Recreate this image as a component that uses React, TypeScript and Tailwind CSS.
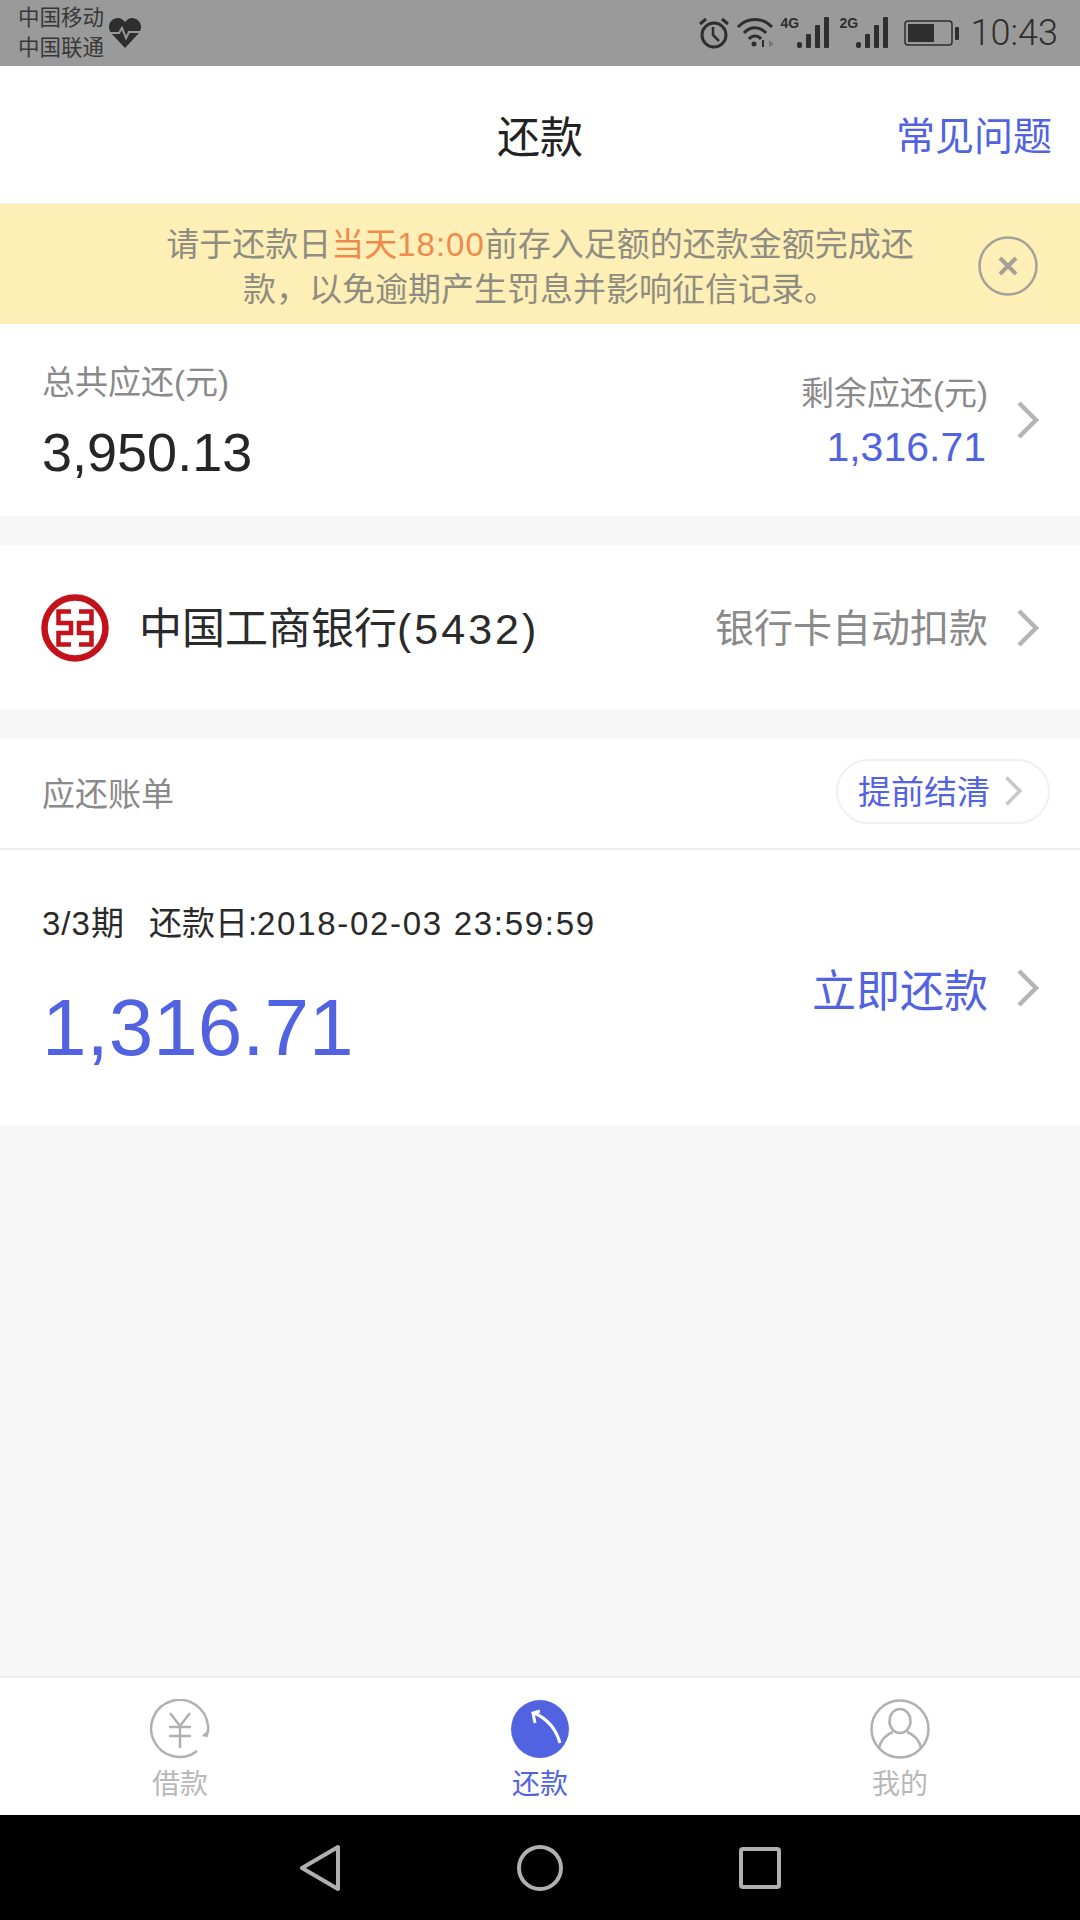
import React from "react";

const FONT = "[font-family:'Liberation_Sans','Noto_Sans_CJK_SC',sans-serif]";

function Chevron({ className = "", color = "#b4b4b8" }: { className?: string; color?: string }) {
  return (
    <svg className={className} width="24" height="40" viewBox="0 0 24 40" fill="none">
      <path d="M3 3 L20 20 L3 37" stroke={color} strokeWidth="4.5" />
    </svg>
  );
}

function StatusBar() {
  const bars = (
    <svg width="34" height="32" viewBox="0 0 34 32" fill="#2e2e2e">
      <rect x="0" y="25" width="5" height="6" rx="2" />
      <rect x="9" y="17" width="5" height="14" rx="1" />
      <rect x="18" y="8" width="5" height="23" rx="1" />
      <rect x="27" y="0" width="5" height="31" rx="1" />
    </svg>
  );
  return (
    <div className="h-[66px] bg-[#9a9a9a] flex items-center justify-between pl-[18px] pr-[22px] text-[#2e2e2e]">
      <div className="flex items-center gap-[4px]">
        <div className="text-[21.5px] leading-[30px] text-[#383838]">
          <div>中国移动</div>
          <div>中国联通</div>
        </div>
        <svg width="34" height="32" viewBox="0 0 34 32">
          <path d="M17 31 L3 16 C-2 9 3 1 10 1 C13 1 15 3 17 5 C19 3 21 1 24 1 C31 1 36 9 31 16 Z" fill="#2e2e2e" />
          <path d="M2 16 H11 L14 11 L18 21 L21 15 H32" stroke="#9a9a9a" strokeWidth="2" fill="none" />
        </svg>
      </div>
      <div className="flex items-center">
        <svg width="32" height="32" viewBox="0 0 32 32" fill="none" stroke="#2e2e2e" className="mr-[6px]">
          <circle cx="16" cy="18" r="12" strokeWidth="3" />
          <path d="M15 10 V18 L21 24" strokeWidth="2.5" />
          <path d="M2 7 L8 2 M30 7 L24 2" strokeWidth="3" />
        </svg>
        <svg width="38" height="32" viewBox="0 0 38 32" fill="none" stroke="#2e2e2e" strokeWidth="3" className="mr-[7px]">
          <path d="M2 10 C11 0 27 0 36 10" />
          <path d="M8 16 C14 9 24 9 30 16" />
          <path d="M13 22 C16 18 22 18 25 22" />
          <circle cx="18" cy="27" r="2.5" fill="#2e2e2e" stroke="none" />
          <path d="M27 30 V23" strokeWidth="2" />
          <path d="M33 23 L38 27 L33 30 Z" fill="#777" stroke="none" />
        </svg>
        <div className="relative w-[50px] h-[32px] mr-[9px]">
          <span className="absolute left-0 top-[-2px] text-[14px] leading-[16px] font-bold">4G</span>
          <div className="absolute right-0 top-0">{bars}</div>
        </div>
        <div className="relative w-[50px] h-[32px] mr-[14px]">
          <span className="absolute left-0 top-[-2px] text-[14px] leading-[16px] font-bold">2G</span>
          <div className="absolute right-0 top-0">{bars}</div>
        </div>
        <svg width="56" height="28" viewBox="0 0 56 28" className="mr-[11px]">
          <rect x="1" y="2" width="47" height="24" rx="3" fill="none" stroke="#2e2e2e" strokeWidth="1.5" />
          <rect x="4" y="5" width="26" height="18" fill="#2e2e2e" />
          <rect x="51" y="8" width="4" height="13" rx="1" fill="#2e2e2e" />
        </svg>
        <span className="text-[36px] leading-none font-light [font-family:Roboto,sans-serif]">10:43</span>
      </div>
    </div>
  );
}

function IcbcLogo() {
  return (
    <svg width="68" height="68" viewBox="0 0 68 68" fill="none">
      <circle cx="34" cy="34" r="30.5" stroke="#c4121a" strokeWidth="6.5" />
      <path
        d="M30 17.5 H17.5 V29 H30 V39 H17.5 V50.5 H30 M38 17.5 H50.5 V29 H38 V39 H50.5 V50.5 H38"
        stroke="#c4121a"
        strokeWidth="4.5"
      />
    </svg>
  );
}

function TabBar() {
  return (
    <div className="h-[139px] bg-white border-t-2 border-[#ececec] grid grid-cols-3 text-[28px] leading-[34px]">
      <div className="flex flex-col items-center pt-[21px] text-[#b8b8b8]">
        <svg width="60" height="60" viewBox="0 0 60 60" fill="none" stroke="#b0b0b0" strokeWidth="2.5">
          <path d="M47 52 A28.5 28.5 0 1 1 58 27" />
          <path d="M58 27 C58.5 30 58 34 56 38 M58 33 L53 37" />
          <path d="M20 14 L30 27 L40 14 M19 28 H41 M19 37 H41 M30 27 V49" />
        </svg>
        <span className="mt-[9px]">借款</span>
      </div>
      <div className="flex flex-col items-center pt-[21px] text-[#5263e2]">
        <svg width="60" height="60" viewBox="0 0 60 60" fill="none">
          <circle cx="30" cy="30" r="29" fill="#5263e2" />
          <path d="M50 44 C46 30 38 20 24 14" stroke="#fff" strokeWidth="3" />
          <path d="M30 12 L23 14 L25 24" stroke="#fff" strokeWidth="3" />
        </svg>
        <span className="mt-[9px]">还款</span>
      </div>
      <div className="flex flex-col items-center pt-[21px] text-[#b8b8b8]">
        <svg width="60" height="60" viewBox="0 0 60 60" fill="none" stroke="#b0b0b0" strokeWidth="2.5">
          <circle cx="30" cy="30" r="28.5" />
          <ellipse cx="30" cy="22" rx="10.5" ry="12" />
          <path d="M9 50 C10 41 17 35 23 33 M51 50 C50 41 43 35 37 33" />
        </svg>
        <span className="mt-[9px]">我的</span>
      </div>
    </div>
  );
}

function NavBar() {
  return (
    <div className="h-[105px] bg-black flex items-center justify-center">
      <div className="grid grid-cols-3 w-[660px] justify-items-center items-center">
        <svg width="44" height="48" viewBox="0 0 44 48" fill="none" stroke="#b0b0b0" strokeWidth="4" strokeLinejoin="round">
          <path d="M40 3 V45 L4 24 Z" />
        </svg>
        <svg width="46" height="46" viewBox="0 0 46 46" fill="none" stroke="#b0b0b0" strokeWidth="4">
          <circle cx="23" cy="23" r="21" />
        </svg>
        <svg width="42" height="42" viewBox="0 0 42 42" fill="none" stroke="#b0b0b0" strokeWidth="4" strokeLinejoin="round">
          <rect x="2" y="2" width="38" height="38" rx="2" />
        </svg>
      </div>
    </div>
  );
}

export default function App() {
  return (
    <div className={`w-[1080px] h-[1920px] flex flex-col bg-[#f7f7f7] overflow-hidden ${FONT}`}>
      <StatusBar />
      <div className="h-[138px] bg-white relative flex items-center justify-center border-b border-[#f0f0f0] pt-[8px]">
        <span className="text-[43px] text-[#222]">还款</span>
        <span className="absolute right-[28px] top-[46px] text-[39px] leading-[50px] text-[#5263e2]">常见问题</span>
      </div>
      <div className="h-[120px] bg-[#fdefb6] flex items-center pl-[160px] pr-[42px] justify-between">
        <p className="w-[760px] mt-[5px] text-center text-[33px] leading-[45px] text-[#8f8d82]">
          请于还款日<span className="text-[#f08a4b]">当天<span className="tracking-[1px]">18:00</span></span>前存入足额的还款金额完成还款，以免逾期产生罚息并影响征信记录。
        </p>
        <svg width="60" height="60" viewBox="0 0 60 60" fill="none" stroke="#a3a199" className="mt-[3px]">
          <circle cx="30" cy="30" r="28.5" strokeWidth="2.5" />
          <path d="M22 22 L38 38 M38 22 L22 38" strokeWidth="4" />
        </svg>
      </div>

      <div className="h-[192px] bg-white flex justify-between pl-[42px] pr-[40px]">
        <div className="pt-[39px]">
          <div className="text-[33px] leading-[40px] text-[#8a8a8a]">总共应还(元)</div>
          <div className="mt-[18px] text-[54px] leading-[62px] text-[#262626]">3,950.13</div>
        </div>
        <div className="flex items-center gap-[28px]">
          <div className="text-right pt-[4px]">
            <div className="text-[33px] leading-[40px] text-[#8a8a8a]">剩余应还(元)</div>
            <div className="mt-[10px] text-[41px] leading-[46px] text-[#5263e2] pr-[2px]">1,316.71</div>
          </div>
          <Chevron />
        </div>
      </div>

      <div className="mt-[29px] h-[165px] bg-white flex items-center justify-between pl-[41px] pr-[40px]">
        <div className="flex items-center gap-[30px]">
          <IcbcLogo />
          <span className="text-[43px] text-[#2a2a2a] mt-[4px]">
            中国工商银行<span className="tracking-[3px]">(5432)</span>
          </span>
        </div>
        <div className="flex items-center gap-[28px]">
          <span className="text-[39px] text-[#8a8a8a] mt-[4px]">银行卡自动扣款</span>
          <Chevron />
        </div>
      </div>

      <div className="mt-[28px] h-[112px] bg-white flex items-center justify-between pl-[42px] pr-[30px] border-b-2 border-[#ececec]">
        <span className="text-[33px] text-[#8a8a8a] mt-[4px]">应还账单</span>
        <div className="w-[214px] h-[65px] rounded-full border-2 border-[#f0f0f0] flex items-center pl-[20px] gap-[14px] mb-[4px]">
          <span className="text-[33px] leading-none text-[#5263e2] mt-[2px]">提前结清</span>
          <Chevron className="w-[19px] h-[32px]" color="#c8c8c8" />
        </div>
      </div>

      <div className="h-[276px] bg-white flex justify-between pl-[42px] pr-[40px]">
        <div className="pt-[54px]">
          <div className="text-[33px] leading-[40px] text-[#2a2a2a] whitespace-pre">
            <span className="tracking-[1px]">3/3</span>期<span className="ml-[25px]">还款日:<span className="tracking-[1.7px]">2018-02-03 23:59:59</span></span>
          </div>
          <div className="mt-[38px] text-[80px] leading-[92px] text-[#5263e2]">1,316.71</div>
        </div>
        <div className="flex items-center gap-[28px]">
          <span className="text-[44px] text-[#5263e2] mt-[7px]">立即还款</span>
          <Chevron />
        </div>
      </div>

      <div className="flex-1" />
      <TabBar />
      <NavBar />
    </div>
  );
}
